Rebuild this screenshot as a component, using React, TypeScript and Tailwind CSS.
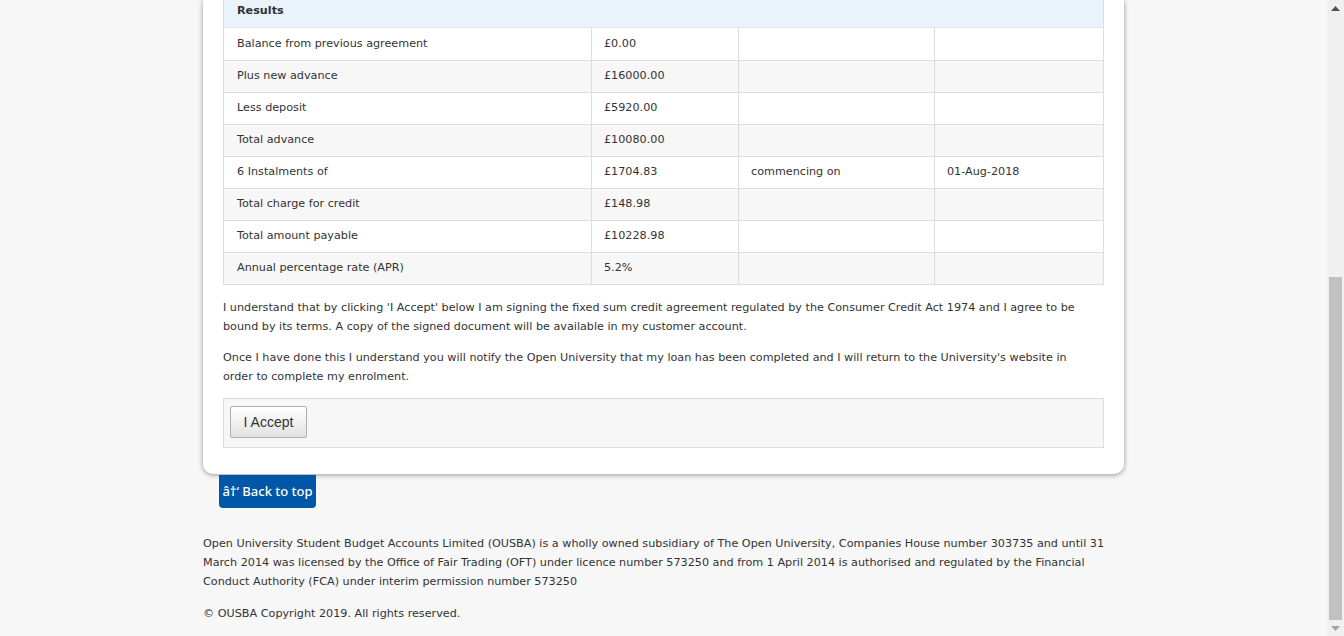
import React from "react";

const rows: [string, string, string, string][] = [
  ["Balance from previous agreement", "£0.00", "", ""],
  ["Plus new advance", "£16000.00", "", ""],
  ["Less deposit", "£5920.00", "", ""],
  ["Total advance", "£10080.00", "", ""],
  ["6 Instalments of", "£1704.83", "commencing on", "01-Aug-2018"],
  ["Total charge for credit", "£148.98", "", ""],
  ["Total amount payable", "£10228.98", "", ""],
  ["Annual percentage rate (APR)", "5.2%", "", ""],
];

export default function App() {
  return (
    <div
      className="flex h-[636px] w-full overflow-hidden bg-[#f7f7f7] text-[#333] text-[11.2px]"
      style={{ fontFamily: '"DejaVu Sans", Verdana, sans-serif' }}
    >
      <div className="flex flex-1 flex-col items-center">
        <div className="flex w-[921px] flex-col">
          {/* Card */}
          <div className="rounded-b-[10px] bg-white px-[20px] pb-[26px] shadow-[0_1px_5px_rgba(0,0,0,0.4)]">
            <div className="-mt-[4px] border border-t-0 border-[#ddd]">
              <div className="flex h-[32px] items-center border-b border-[#dde6ee] bg-[#eaf2fa] pl-[13px] font-bold">
                Results
              </div>
              {rows.map((r, i) => (
                <div
                  key={i}
                  className={`grid h-[32px] grid-cols-[367px_147px_196px_1fr] ${
                    i > 0 ? "border-t border-[#ddd]" : ""
                  } ${i % 2 === 1 ? "bg-[#f7f7f7]" : "bg-white"}`}
                >
                  <div className="flex items-center pl-[13px]">{r[0]}</div>
                  <div className="flex items-center border-l border-[#ddd] pl-[12px]">{r[1]}</div>
                  <div className="flex items-center border-l border-[#ddd] pl-[12px]">{r[2]}</div>
                  <div className="flex items-center border-l border-[#ddd] pl-[12px]">{r[3]}</div>
                </div>
              ))}
            </div>
            <p className="mt-[13px] leading-[19px]">
              I understand that by clicking 'I Accept' below I am signing the fixed sum credit
              agreement regulated by the Consumer Credit Act 1974 and I agree to be bound by its
              terms. A copy of the signed document will be available in my customer account.
            </p>
            <p className="mt-[12px] leading-[19px]">
              Once I have done this I understand you will notify the Open University that my loan
              has been completed and I will return to the University's website in
              <br />
              order to complete my enrolment.
            </p>
            <div className="mt-[12px] border border-[#ddd] bg-[#f7f7f7] px-[6px] pb-[9px] pt-[7px]">
              <button
                className="h-[32px] w-[77px] rounded-[2px] border border-[#adadad] bg-gradient-to-b from-white to-[#e2e2e2] text-[14px] text-[#333]"
                style={{ fontFamily: '"Liberation Sans", Arial, sans-serif' }}
              >
                I Accept
              </button>
            </div>
          </div>

          {/* Back to top */}
          <div className="pl-[16px] pt-[1px]">
            <div
              className="inline-flex h-[33px] w-[97px] items-center justify-center rounded-b-[4px] bg-[#0057a7] text-[13px] font-medium text-white"
              style={{ fontFamily: '"Noto Sans", "Open Sans", sans-serif' }}
            >
              â†‘ Back to top
            </div>
          </div>

          {/* Footer */}
          <div className="pt-[26px]">
            <p className="leading-[19px]">
              Open University Student Budget Accounts Limited (OUSBA) is a wholly owned subsidiary
              of The Open University, Companies House number 303735 and until 31 March 2014 was
              licensed by the Office of Fair Trading (OFT) under licence number 573250 and from 1
              April 2014 is authorised and regulated by the Financial Conduct Authority (FCA) under
              interim permission number 573250
            </p>
            <p className="mt-[13px] leading-[19px]">© OUSBA Copyright 2019. All rights reserved.</p>
          </div>
        </div>
      </div>

      {/* Scrollbar */}
      <div className="flex w-[17px] flex-col bg-[#f0f0f0]">
        <div className="flex h-[17px] items-center justify-center">
          <svg width="9" height="5" viewBox="0 0 9 5">
            <path d="M0 5 L4.5 0 L9 5 Z" fill="#505050" />
          </svg>
        </div>
        <div className="h-[260px]" />
        <div className="mx-[2px] h-[343px] bg-[#c1c1c1]" />
        <div className="flex flex-1 items-center justify-center">
          <svg width="9" height="5" viewBox="0 0 9 5">
            <path d="M0 0 L9 0 L4.5 5 Z" fill="#a3a3a3" />
          </svg>
        </div>
      </div>
    </div>
  );
}
